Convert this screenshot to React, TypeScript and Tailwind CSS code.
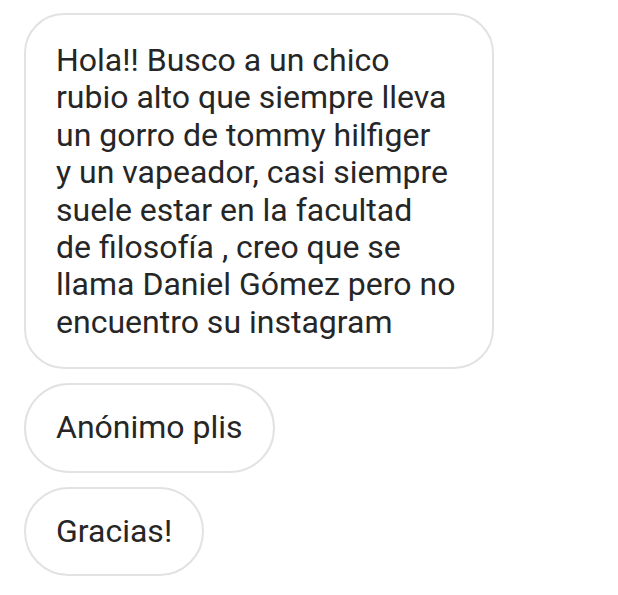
const lines = [
  'Hola!! Busco a un chico',
  'rubio alto que siempre lleva',
  'un gorro de tommy hilfiger',
  'y un vapeador, casi siempre',
  'suele estar en la facultad',
  'de filosofía , creo que se',
  'llama Daniel Gómez pero no',
  'encuentro su instagram',
];

function Bubble({ children, className = '' }: { children: React.ReactNode; className?: string }) {
  return (
    <div
      className={`border-2 border-[#e2e2e2] bg-white px-[30px] text-[32px] leading-[37.4px] text-[#262626] ${className}`}
    >
      {children}
    </div>
  );
}

export default function App() {
  return (
    <div
      className="h-[595px] w-[618px] bg-white pl-[24px] pt-[13px]"
      style={{ fontFamily: 'Roboto, "Noto Sans", sans-serif' }}
    >
      <div className="flex flex-col items-start gap-[14px]">
        <Bubble className="w-[470px] rounded-[40px] pt-[27px] pb-[26px]">
          {lines.map((l) => (
            <div key={l} className="whitespace-nowrap">
              {l}
            </div>
          ))}
        </Bubble>
        <Bubble className="rounded-full py-[24px]">Anónimo plis</Bubble>
        <Bubble className="rounded-full py-[24px]">Gracias!</Bubble>
      </div>
    </div>
  );
}
